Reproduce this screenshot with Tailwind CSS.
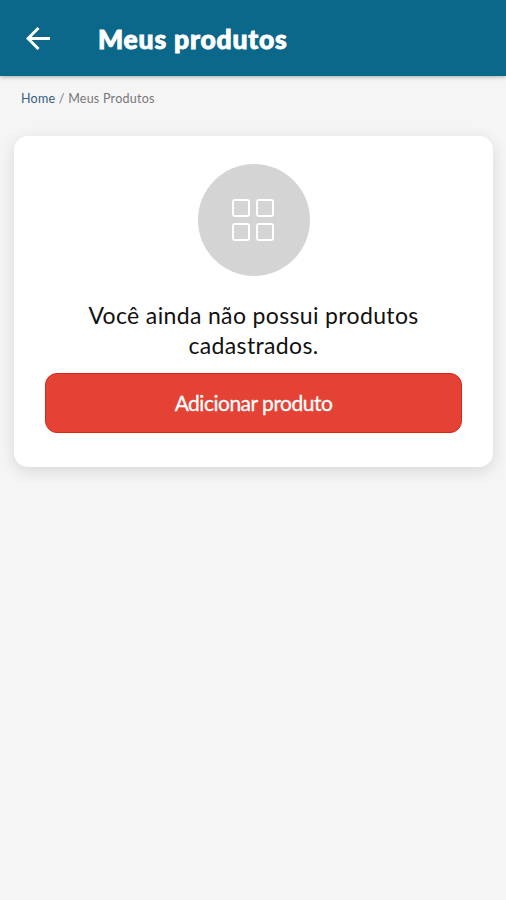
<!DOCTYPE html>
<html lang="pt-BR">
<head>
    <meta charset="UTF-8">
    <meta name="viewport" content="width=device-width, initial-scale=1.0">
    <title>Meus produtos</title>
    <script src="https://cdn.jsdelivr.net/npm/@tailwindcss/browser@4"></script>
</head>
<body class="bg-[#f5f5f5] min-h-screen font-[Lato,sans-serif]">
    <!-- Cabeçalho -->
    <header class="h-[76px] bg-[#0c688a] flex items-center pl-[26px] shadow-[0_1px_4px_rgba(0,0,0,0.3)]">
        <button type="button" aria-label="Voltar" class="w-6 h-6">
            <svg class="w-6 h-6" viewBox="0 0 24 24" fill="none" stroke="#fff" stroke-width="3">
                <path d="M24 12.5H2.5M12.5 2L2 12.5L12.5 23" />
            </svg>
        </button>
        <h1 class="ml-[48px] pt-px text-[26.5px] leading-8 font-black tracking-[0.8px] [-webkit-text-stroke:0.9px_#fff] text-white whitespace-nowrap">Meus produtos</h1>
    </header>

    <!-- Navegação -->
    <nav class="pt-[15px] pl-[21px] text-[12.5px] leading-4 tracking-[0.25px] text-[#777] whitespace-nowrap">
        <a href="#" class="text-[#34607c]">Home</a> / <span>Meus Produtos</span>
    </nav>

    <!-- Lista vazia -->
    <main class="mt-[29px] ml-[14px] mr-[13px] h-[331px] bg-white rounded-[14px] px-[31px] pt-7 flex flex-col items-center shadow-[0_4px_16px_rgba(0,0,0,0.12)]">
        <div class="w-28 h-28 rounded-full bg-[#d4d4d4] flex items-center justify-center">
            <svg class="w-[42px] h-[42px] mr-px" viewBox="0 0 42 42" fill="none" stroke="#fff" stroke-width="2">
                <rect x="1" y="1" width="16" height="16" rx="2" />
                <rect x="25" y="1" width="16" height="16" rx="2" />
                <rect x="1" y="25" width="16" height="16" rx="2" />
                <rect x="25" y="25" width="16" height="16" rx="2" />
            </svg>
        </div>
        <p class="mt-6 text-[23px] leading-[30px] tracking-[0.35px] text-center text-[#111] whitespace-nowrap">Você ainda não possui produtos<br>cadastrados.</p>
        <button type="button" class="mt-[13px] w-full h-[60px] shrink-0 rounded-xl border border-[#d9261b] bg-[#e34234] text-white text-[21px] tracking-[-0.5px] [-webkit-text-stroke:0.3px_#fff] whitespace-nowrap">Adicionar produto</button>
    </main>
</body>
</html>
